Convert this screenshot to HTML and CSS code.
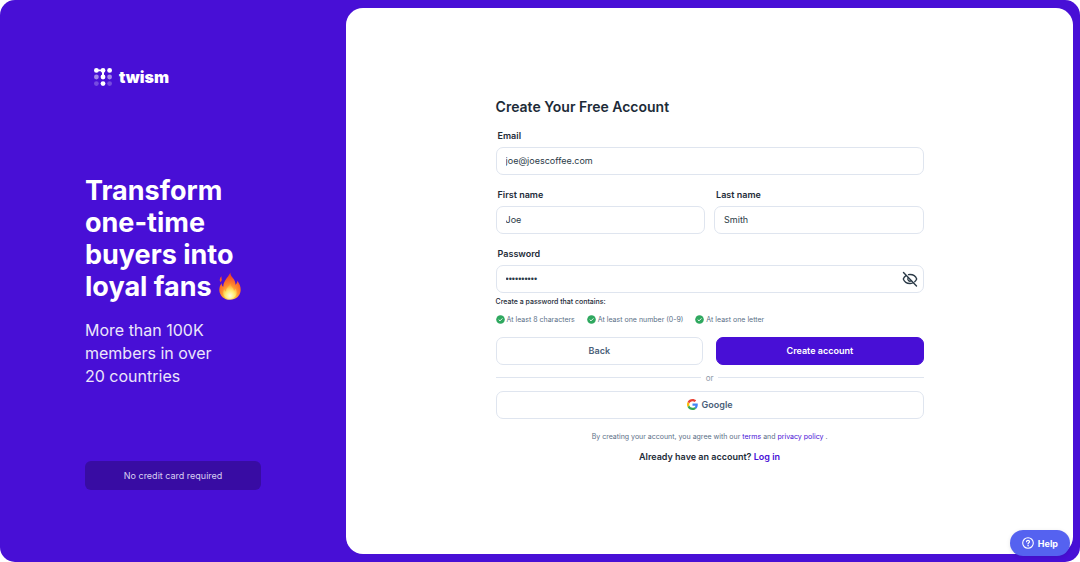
FILE: index.html
```html
<!DOCTYPE html>
<html lang="en">
<head>
  <meta charset="UTF-8">
  <meta name="viewport" content="width=device-width, initial-scale=1.0">
  <title>Create Your Free Account | twism</title>
  <link rel="stylesheet" href="styles.css">
</head>
<body>
  <div class="page">
    <aside class="sidebar">
      <div class="brand">
        <svg class="brand-mark" viewBox="0 0 18 18" aria-hidden="true">
          <g fill="#fff">
            <circle cx="2.4" cy="2.4" r="2.4"/>
            <circle cx="9" cy="2.4" r="2.4"/>
            <circle cx="15.6" cy="2.4" r="2.4"/>
            <circle cx="9" cy="9" r="2.4"/>
            <circle cx="9" cy="15.6" r="2.4"/>
            <path d="M2 1.500h8v7.500H8V3.300H2z"/>
          </g>
          <g fill="#fff" opacity=".5">
            <circle cx="2.4" cy="9" r="2.4"/>
            <circle cx="15.6" cy="9" r="2.4"/>
          </g>
          <g fill="#fff" opacity=".25">
            <circle cx="2.4" cy="15.6" r="2.4"/>
            <circle cx="15.6" cy="15.6" r="2.4"/>
          </g>
        </svg>
        <span class="brand-name">twism</span>
      </div>

      <h1 class="headline">
        Transform<br>one-time<br>buyers into<br>loyal fans
        <svg class="fire" viewBox="0 0 24 28" role="img" aria-label="fire">
          <defs>
            <radialGradient id="flame" cx=".5" cy=".88" r=".85">
              <stop offset="0" stop-color="#fff9b0"/>
              <stop offset=".25" stop-color="#ffc940"/>
              <stop offset=".5" stop-color="#ff8a2e"/>
              <stop offset=".8" stop-color="#f4562b"/>
              <stop offset="1" stop-color="#e8452a"/>
            </radialGradient>
            <radialGradient id="core" cx=".5" cy=".8" r=".7">
              <stop offset="0" stop-color="#fffde0"/>
              <stop offset=".5" stop-color="#ffec70"/>
              <stop offset="1" stop-color="#ff9f2e"/>
            </radialGradient>
          </defs>
          <path fill="url(#flame)" d="M12.500.5c-.5 2 .9 3.600 2.400 5.600 1.700 2.200 2.700 4.200 2.500 6.600 1.300-.9 1.900-2.300 1.800-3.900 2.400 2.900 3.700 6.100 3.500 9.500-.4 5.800-4.900 9.500-10.700 9.500S1.600 23.800 1.300 18.200c-.1-3 .9-5.200 2.300-7 .1 1.700.7 2.800 1.700 3.500C5.200 9.400 9.300 6.200 12.500.5z"/>
          <path fill="#f4562b" d="M3.600 4.200C1.700 5.900 1 8.200 2.600 10.200c.4-1 1.300-1.400 1.200-2.700-.1-1.100-.5-1.900-.2-3.300z"/>
          <path fill="url(#core)" d="M12.600 11.500c.3 3.400 3 4.100 3.400 7.200.8-.5 1.300-1.200 1.600-2.200 1.200 2 1.500 4 .8 6-.9 2.600-3.400 4.300-6.500 4.300-3.600 0-6.200-2-6.600-4.900-.3-1.700 0-3.200.8-4.700.4 1.100 1 1.800 2 2.300-.3-3.500 2.600-4.800 4.500-8z"/>
        </svg>
      </h1>
      <p class="subhead">More than 100K<br>members in over<br>20 countries</p>

      <div class="badge">No credit card required</div>
    </aside>

    <main class="panel">
      <form class="signup">
        <h2>Create Your Free Account</h2>

        <div class="field">
          <label for="email">Email</label>
          <input type="email" id="email" name="email" value="joe@joescoffee.com" required>
        </div>

        <div class="name-row">
          <div class="field">
            <label for="first-name">First name</label>
            <input type="text" id="first-name" name="first-name" value="Joe" required>
          </div>
          <div class="field">
            <label for="last-name">Last name</label>
            <input type="text" id="last-name" name="last-name" value="Smith" required>
          </div>
        </div>

        <div class="field">
          <label for="password">Password</label>
          <div class="password-box">
            <input type="password" id="password" name="password" value="joescafe10" required>
            <button type="button" class="toggle" aria-label="Show password">
              <svg viewBox="0 0 16 16" fill="none" stroke="#2b3a47" stroke-linecap="round" stroke-linejoin="round">
                <path stroke-width="1.300" d="M3.900 4.600C2.600 5.500 1.700 6.700 1.300 8c.9 2.600 3.500 4.500 6.700 4.500 1 0 1.900-.2 2.700-.5M6.500 3.600c.5-.1 1-.1 1.500-.1 3.200 0 5.800 1.900 6.700 4.500-.4 1.100-1.100 2-2 2.800M6.100 6.900a2.200 2.200 0 0 0 3 3"/>
                <path stroke-width="1.400" d="M1.500 1.500l13 13.500"/>
              </svg>
            </button>
          </div>
        </div>

        <p class="rules-title">Create a password that contains:</p>
        <ul class="rules">
          <li>
            <svg viewBox="0 0 9 9" aria-hidden="true"><circle cx="4.500" cy="4.500" r="4.300" fill="#2fa85f"/><path d="M2.700 4.600l1.300 1.300 2.400-2.500" fill="none" stroke="#fff" stroke-width=".9"/></svg>
            At least 8 characters
          </li>
          <li>
            <svg viewBox="0 0 9 9" aria-hidden="true"><circle cx="4.500" cy="4.500" r="4.300" fill="#2fa85f"/><path d="M2.700 4.600l1.300 1.300 2.400-2.500" fill="none" stroke="#fff" stroke-width=".9"/></svg>
            At least one number (0-9)
          </li>
          <li>
            <svg viewBox="0 0 9 9" aria-hidden="true"><circle cx="4.500" cy="4.500" r="4.300" fill="#2fa85f"/><path d="M2.700 4.600l1.300 1.300 2.400-2.500" fill="none" stroke="#fff" stroke-width=".9"/></svg>
            At least one letter
          </li>
        </ul>

        <div class="actions">
          <button type="button" class="btn">Back</button>
          <button type="submit" class="btn btn-primary">Create account</button>
        </div>

        <div class="divider">or</div>

        <button type="button" class="btn btn-google">
          <svg viewBox="0 0 48 48" aria-hidden="true">
            <path fill="#EA4335" d="M24 9.500c3.540 0 6.710 1.220 9.210 3.600l6.850-6.850C35.900 2.380 30.470 0 24 0 14.620 0 6.510 5.380 2.560 13.220l7.980 6.190C12.430 13.720 17.740 9.500 24 9.500z"/>
            <path fill="#4285F4" d="M46.980 24.550c0-1.570-.15-3.090-.38-4.550H24v9.020h12.940c-.58 2.960-2.260 5.480-4.780 7.180l7.730 6c4.510-4.180 7.090-10.360 7.090-17.650z"/>
            <path fill="#FBBC05" d="M10.530 28.590c-.48-1.450-.76-2.990-.76-4.590s.27-3.140.76-4.590l-7.980-6.190C.92 16.460 0 20.120 0 24c0 3.880.92 7.540 2.560 10.780l7.970-6.190z"/>
            <path fill="#34A853" d="M24 48c6.480 0 11.930-2.130 15.890-5.810l-7.730-6c-2.150 1.450-4.920 2.300-8.160 2.300-6.260 0-11.570-4.220-13.470-9.910l-7.980 6.190C6.510 42.620 14.620 48 24 48z"/>
          </svg>
          Google
        </button>

        <p class="terms">By creating your account, you agree with our <a href="#">terms</a> and <a href="#">privacy policy</a> .</p>
        <p class="login">Already have an account? <a href="#">Log in</a></p>
      </form>
    </main>

    <button type="button" class="help">
      <svg viewBox="0 0 12 12" fill="none" stroke="#fff" stroke-linecap="round" aria-hidden="true">
        <circle cx="6" cy="6" r="5.300" stroke-width="1.100"/>
        <path stroke-width="1.200" d="M4.500 4.700C4.600 2.800 7.500 2.900 7.500 4.700 7.500 5.800 6 5.800 6 7"/>
        <circle cx="6" cy="8.800" r=".3" stroke-width=".8"/>
      </svg>
      Help
    </button>
  </div>
</body>
</html>
```
FILE: styles.css
```css
* {
  box-sizing: border-box;
}
body {
  margin: 0;
  font-family: Inter, sans-serif;
  color: #1d2b38;
  background-color: #fff;
}
h1, h2, p, ul {
  margin: 0;
  padding: 0;
}
a {
  color: #480fd6;
  text-decoration: none;
}
.page {
  position: relative;
  display: grid;
  grid-template-columns: 10fr 21fr;
  min-height: 100vh;
  padding: 8px 7px 8px 0;
  border-radius: 15px;
  background: #480fd6;
}

/* left side */
.sidebar {
  padding: 59px 85px 0;
  color: #fff;
}
.brand {
  display: flex;
  align-items: center;
  gap: 7px;
  height: 20px;
  margin-left: 9px;
}
.brand-mark {
  width: 18px;
  height: 18px;
}
.brand-name {
  font-size: 16px;
  font-weight: 900;
}
.headline {
  margin-top: 88px;
  font-size: 27px;
  font-weight: 700;
  line-height: 32px;
  white-space: nowrap;
}
.fire {
  width: 24px;
  height: 28px;
  vertical-align: -4px;
}
.subhead {
  margin-top: 16px;
  font-size: 16px;
  line-height: 23px;
  white-space: nowrap;
  color: #ece6fb;
}
.badge {
  margin-top: 73px;
  padding: 7px 0;
  border-radius: 6px;
  background-color: #380ca3;
  color: #d9d0f2;
  font-size: 9px;
  line-height: 15px;
  text-align: center;
  white-space: nowrap;
}

/* right side */
.panel {
  display: flex;
  align-items: center;
  justify-content: center;
  padding-bottom: 2px;
  border-radius: 17px;
  background-color: #fff;
}
.signup {
  width: 428px;
}
.signup h2 {
  margin-bottom: 11px;
  font-size: 14px;
  font-weight: 600;
  line-height: 20px;
}
.field {
  flex: 1;
  margin-bottom: 12px;
}
.field label {
  display: block;
  margin: 0 2px 4px;
  font-size: 9px;
  font-weight: 600;
  line-height: 15px;
}
.field input {
  display: block;
  width: 100%;
  height: 28px;
  padding: 0 9px;
  border: 1px solid #dfe5ef;
  border-radius: 7px;
  background-color: #fff;
  color: #2b3a47;
  font-family: inherit;
  font-size: 9px;
}
/* smaller, tighter bullets than Inter has */
.field input[type="password"] {
  font-family: "Liberation Sans", Arial, sans-serif;
}
.name-row {
  display: flex;
  gap: 9px;
}
.password-box {
  position: relative;
}
.toggle {
  position: absolute;
  top: 6px;
  right: 6px;
  width: 16px;
  height: 16px;
  padding: 0;
  border: none;
  background: none;
}
.toggle svg {
  display: block;
}
.rules-title {
  margin-top: -8px;
  font-size: 7px;
  font-weight: 500;
  line-height: 10px;
}
.rules {
  display: flex;
  gap: 12px;
  margin: 8px 0 12px;
  list-style: none;
  color: #5b6f87;
  font-size: 7px;
  line-height: 10px;
}
.rules li {
  display: flex;
  align-items: center;
  gap: 2px;
}
.rules svg {
  width: 9px;
  height: 9px;
}
.actions {
  display: flex;
  gap: 13px;
}
.btn {
  flex: 1;
  height: 28px;
  padding: 0;
  border: 1px solid #dfe5ef;
  border-radius: 7px;
  background-color: #fff;
  color: #4a6079;
  font-family: inherit;
  font-size: 9px;
  font-weight: 600;
}
.btn-primary {
  border-color: #480fd6;
  background-color: #480fd6;
  color: #fff;
}
.divider {
  display: flex;
  align-items: center;
  gap: 5px;
  margin: 8px 0;
  color: #8d99a8;
  font-size: 8px;
  line-height: 10px;
}
.divider::before,
.divider::after {
  content: "";
  flex: 1;
  height: 1px;
  background-color: #dfe5ef;
}
.btn-google {
  display: flex;
  align-items: center;
  justify-content: center;
  gap: 4px;
  width: 100%;
}
.btn-google svg {
  width: 11px;
  height: 11px;
}
.terms {
  margin-top: 13px;
  color: #5b6f87;
  font-size: 7px;
  line-height: 10px;
  text-align: center;
}
.login {
  margin-top: 8px;
  font-size: 9px;
  font-weight: 600;
  line-height: 14px;
  text-align: center;
}

/* floating help button */
.help {
  position: absolute;
  right: 10px;
  bottom: 6px;
  display: flex;
  align-items: center;
  gap: 4px;
  height: 26px;
  padding: 0 12px;
  border: none;
  border-radius: 13px;
  background-color: #5562f0;
  box-shadow: 0 1px 4px rgba(0, 0, 0, 0.1);
  color: #fff;
  font-family: inherit;
  font-size: 9px;
  font-weight: 700;
}
.help svg {
  width: 12px;
  height: 12px;
}
```
